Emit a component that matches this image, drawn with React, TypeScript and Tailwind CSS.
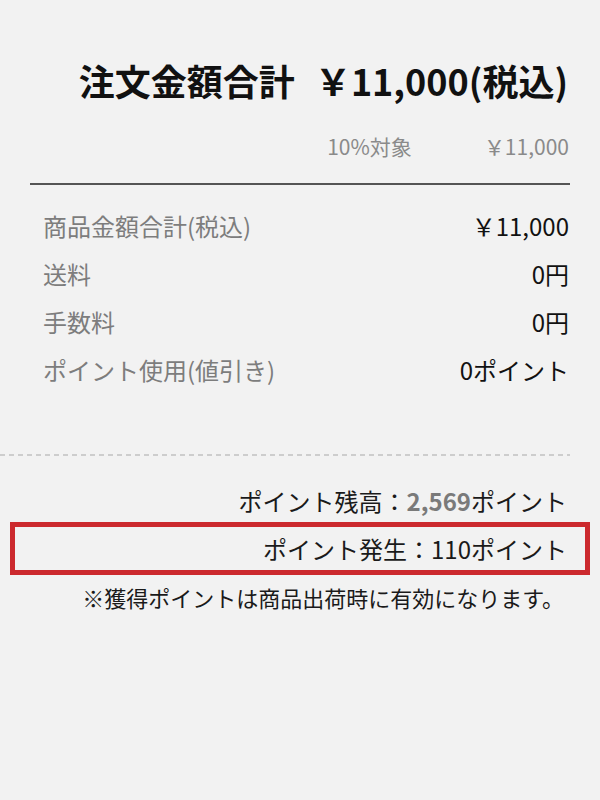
import React from 'react';

const rows = [
  { label: '商品金額合計(税込)', value: '￥11,000' },
  { label: '送料', value: '0円' },
  { label: '手数料', value: '0円' },
  { label: 'ポイント使用(値引き)', value: '0ポイント' },
];

const font = { fontFamily: '"Noto Sans CJK JP", "Noto Sans", sans-serif' };

const App: React.FC = () => {
  return (
    <div className="w-[600px] h-[800px] bg-[#f2f2f2] text-[#111]" style={font}>
      {/* Total */}
      <div className="pt-[53px] pr-[32px] flex justify-end items-center gap-[20px] text-[36px] font-bold leading-[54px]">
        <span>注文金額合計</span>
        <span>￥11,000(税込)</span>
      </div>
      <div className="mt-[25px] pr-[31px] flex justify-end gap-[72px] text-[21px] text-[#8a8a8a] leading-[28px]">
        <span>10%対象</span>
        <span>￥11,000</span>
      </div>

      <div className="mx-[30px] mt-[23px] border-t-2 border-[#555]" />

      {/* Breakdown */}
      <div className="pr-[31px] pl-[43px] pt-[25px] flex flex-col gap-[16px] text-[24px] leading-[32px]">
        {rows.map((row) => (
          <div key={row.label} className="flex justify-between">
            <span className="text-[#7d7d7d]">{row.label}</span>
            <span className="text-[#111]">{row.value}</span>
          </div>
        ))}
      </div>

      <div className="mr-[30px] mt-[68px] h-[2px] bg-[repeating-linear-gradient(to_right,#cdcdcd_0_5px,transparent_5px_9px)]" />

      {/* Points */}
      <div className="pt-[29px] pr-[33px] text-right text-[24px] leading-[32px] text-[#1a1a1a]">
        ポイント残高：<span className="font-bold text-[#7a7a7a]">2,569</span>ポイント
      </div>
      <div className="mx-[10px] mt-[5px] border-[5px] border-[#cc2a2e] h-[53px] pr-[18px] flex items-center justify-end text-[24px] text-[#1a1a1a]">
        ポイント発生：110ポイント
      </div>
      <div className="mt-[7px] pr-[36px] text-right text-[22px] leading-[30px] text-[#1a1a1a]">
        ※獲得ポイントは商品出荷時に有効になります。
      </div>
    </div>
  );
};

export default App;
